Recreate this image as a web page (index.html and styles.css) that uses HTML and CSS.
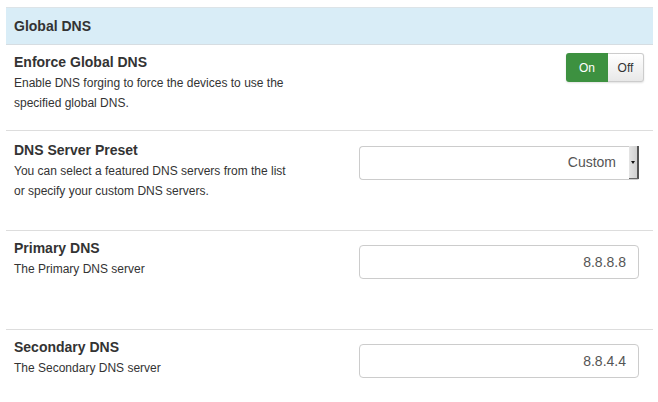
FILE: index.html
```html
<!DOCTYPE html>
<html>
<head>
<meta charset="utf-8">
<link rel="stylesheet" href="styles.css">
</head>
<body>
<div class="page">
  <div class="panel">
    <div class="panel-heading">Global DNS</div>

    <div class="row row-enforce">
      <div class="info">
        <div class="title">Enforce Global DNS</div>
        <div class="desc">Enable DNS forging to force the devices to use the<br>specified global DNS.</div>
      </div>
      <div class="toggle">
        <span class="toggle-on">On</span>
        <span class="toggle-off">Off</span>
      </div>
    </div>

    <div class="row row-preset">
      <div class="info">
        <div class="title">DNS Server Preset</div>
        <div class="desc">You can select a featured DNS servers from the list<br>or specify your custom DNS servers.</div>
      </div>
      <div class="control select">
        <span class="select-value">Custom</span>
        <span class="select-btn"><span class="caret"></span></span>
      </div>
    </div>

    <div class="row">
      <div class="info">
        <div class="title">Primary DNS</div>
        <div class="desc">The Primary DNS server</div>
      </div>
      <div class="control input">8.8.8.8</div>
    </div>

    <div class="row row-last">
      <div class="info">
        <div class="title">Secondary DNS</div>
        <div class="desc">The Secondary DNS server</div>
      </div>
      <div class="control input">8.8.4.4</div>
    </div>
  </div>
</div>
</body>
</html>
```

FILE: styles.css
```css
html, body {
  margin: 0;
  padding: 0;
  background: #fff;
}
body {
  font-family: "Liberation Sans", Arial, Helvetica, sans-serif;
  color: #333;
  width: 658px;
  height: 402px;
  overflow: hidden;
}
.page {
  padding: 7px 5px 0 6px;
}
.panel {
  display: flex;
  flex-direction: column;
}
.panel-heading {
  background: #d9edf7;
  border-top: 1px solid #dde4e8;
  border-bottom: 1px solid #d6dde2;
  height: 36px;
  line-height: 36px;
  padding: 0 8px;
  font-size: 14px;
  font-weight: bold;
  color: #333;
}
.row {
  display: flex;
  align-items: flex-start;
  justify-content: space-between;
  border-bottom: 1px solid #ddd;
  padding: 7px 14px 0 8px;
  height: 91px;
}
.row-enforce {
  height: 78px;
}
.row-preset {
  padding-top: 9px;
  height: 90px;
}
.row-last {
  border-bottom: none;
  height: 60px;
}
.title {
  font-size: 14px;
  font-weight: bold;
  line-height: 20px;
  margin-bottom: 1px;
  color: #333;
}
.desc {
  font-size: 12px;
  line-height: 20px;
  color: #333;
}
.toggle {
  display: flex;
  margin-top: 1px;
  margin-right: -5px;
  height: 29px;
  border-radius: 3px;
  box-shadow: 0 1px 2px rgba(0,0,0,0.12);
  font-size: 12px;
}
.toggle-on {
  width: 42px;
  background: #3d9140;
  color: #fff;
  border-radius: 3px 0 0 3px;
  display: flex;
  align-items: center;
  justify-content: center;
}
.toggle-off {
  width: 35px;
  background: linear-gradient(#fff, #e8e8e8);
  color: #333;
  border: 1px solid #ccc;
  border-left: none;
  border-radius: 0 3px 3px 0;
  display: flex;
  align-items: center;
  justify-content: center;
}
.control {
  box-sizing: border-box;
  width: 280px;
  height: 34px;
  border: 1px solid #ccc;
  border-radius: 4px;
  font-size: 14px;
  color: #555;
  background: #fff;
}
.input {
  margin-top: 7px;
  line-height: 32px;
  text-align: right;
  padding-right: 12px;
}
.select {
  margin-top: 6px;
  display: flex;
  align-items: stretch;
  justify-content: flex-end;
  border-right: none;
  border-radius: 4px 2px 2px 4px;
}
.select-value {
  line-height: 30px;
  padding-right: 13px;
}
.select-btn {
  width: 8px;
  margin-top: -1px;
  background: linear-gradient(to right, #e4e4e4, #d0d0d0);
  border-right: 2px solid #555;
  border-bottom: 1px solid #666;
  display: flex;
  align-items: center;
  justify-content: center;
}
.caret {
  width: 0;
  height: 0;
  border-left: 2.5px solid transparent;
  border-right: 2.5px solid transparent;
  border-top: 3px solid #111;
}
```
